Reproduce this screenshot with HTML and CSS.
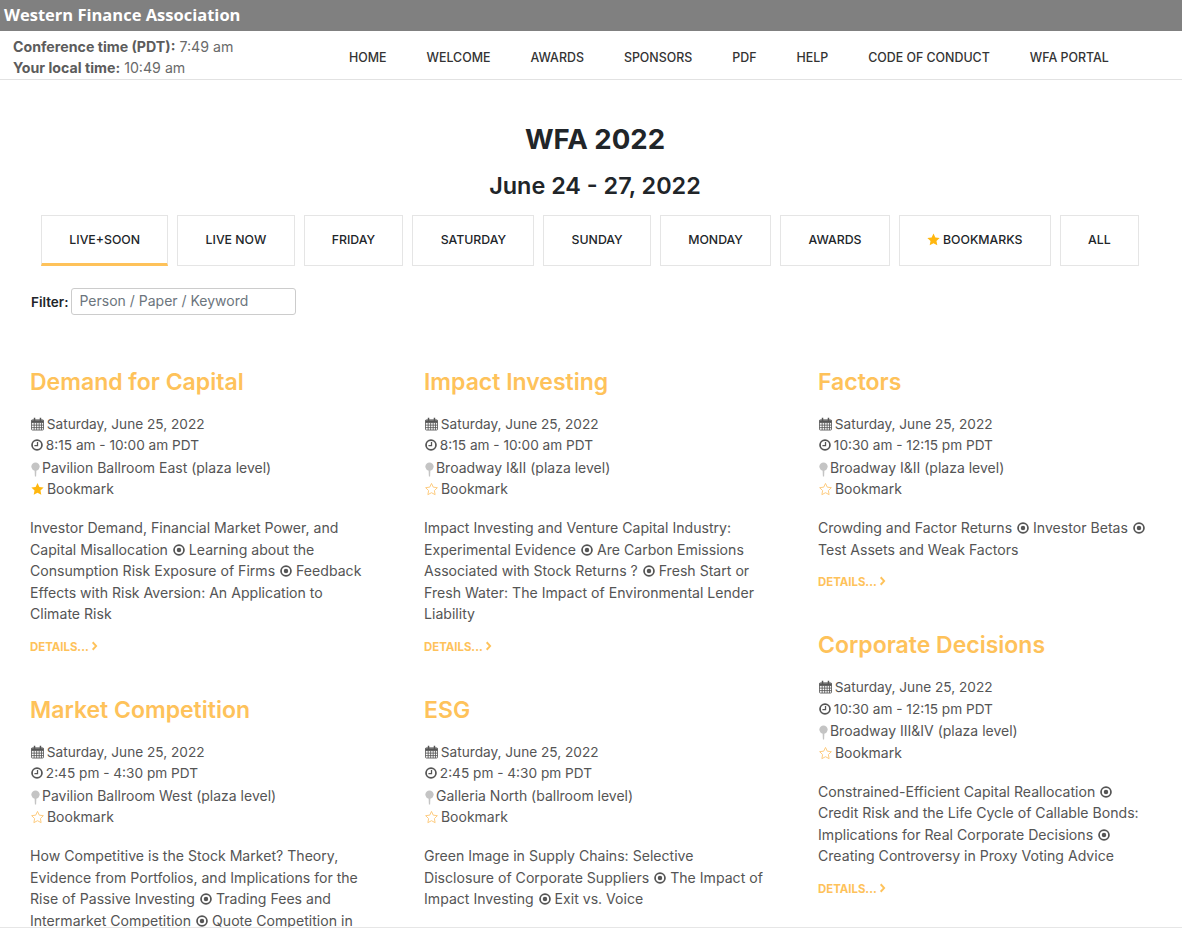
FILE: index.html
```html
<!DOCTYPE html>
<html lang="en">
<head>
    <meta charset="UTF-8">
    <title>WFA 2022</title>
    <link rel="stylesheet" href="styles.css">
</head>
<body>
    <svg class="icon-defs" aria-hidden="true">
        <symbol id="i-cal" viewBox="0 0 14 14">
            <path d="M1.500 2.500h11a1 1 0 0 1 1 1v9a1 1 0 0 1-1 1h-11a1 1 0 0 1-1-1v-9a1 1 0 0 1 1-1zM.5 5.500h13M.5 8.200h13M.5 10.900h13M3.400 5.500v8M6.100 5.500v8M8.800 5.500v8M11.300 5.500v8" fill="none" stroke="currentColor" stroke-width=".9"/>
            <path d="M3 .3h1.600v3.400H3zM9.400 .3H11v3.400H9.400zM.5 3h13v2.500H.5z" fill="currentColor"/>
        </symbol>
        <symbol id="i-clock" viewBox="0 0 14 14">
            <circle cx="7" cy="7" r="5.800" fill="none" stroke="currentColor" stroke-width="2"/>
            <path d="M7.600 3.600v4.200H4" fill="none" stroke="currentColor" stroke-width="1.500"/>
        </symbol>
        <symbol id="i-pin" viewBox="0 0 10 16">
            <circle cx="5" cy="4.800" r="4.600" fill="currentColor"/>
            <path d="M4 8h2l-.3 7.700h-1.400z" fill="currentColor"/>
        </symbol>
        <symbol id="i-star" viewBox="0 0 14 14">
            <path d="M7 .6l2 4.200 4.600.6-3.400 3.200.9 4.600L7 11.100l-4.100 2.100.9-4.600L.4 5.400 5 4.800z" fill="currentColor"/>
        </symbol>
        <symbol id="i-star-o" viewBox="0 0 14 14">
            <path d="M7 1l1.900 4 4.400.6-3.200 3.100.8 4.400L7 11l-3.900 2.100.8-4.400L.7 5.600l4.400-.6z" fill="none" stroke="currentColor" stroke-width="1"/>
        </symbol>
        <symbol id="i-dot" viewBox="0 0 14 14">
            <circle cx="7" cy="7" r="5.800" fill="none" stroke="currentColor" stroke-width="2"/>
            <circle cx="7" cy="7" r="2.600" fill="currentColor"/>
        </symbol>
        <symbol id="i-chev" viewBox="0 0 8 12">
            <path d="M1.800 1.500L6 6l-4.200 4.500" fill="none" stroke="currentColor" stroke-width="2.200"/>
        </symbol>
    </svg>

    <div class="top-bar">Western Finance Association</div>

    <div class="nav-row">
        <div class="times">
            <div><b>Conference time (PDT):</b> 7:49 am</div>
            <div><b>Your local time:</b> 10:49 am</div>
        </div>
        <nav class="main-nav">
            <a href="#">HOME</a>
            <a href="#">WELCOME</a>
            <a href="#">AWARDS</a>
            <a href="#">SPONSORS</a>
            <a href="#">PDF</a>
            <a href="#">HELP</a>
            <a href="#">CODE OF CONDUCT</a>
            <a href="#">WFA PORTAL</a>
        </nav>
    </div>

    <div class="page-head">
        <h1>WFA 2022</h1>
        <h2>June 24 - 27, 2022</h2>
    </div>

    <div class="tabs">
        <a class="tab active" href="#">LIVE+SOON</a>
        <a class="tab" href="#">LIVE NOW</a>
        <a class="tab" href="#">FRIDAY</a>
        <a class="tab" href="#">SATURDAY</a>
        <a class="tab" href="#">SUNDAY</a>
        <a class="tab" href="#">MONDAY</a>
        <a class="tab" href="#">AWARDS</a>
        <a class="tab" href="#"><svg class="tab-star"><use href="#i-star"/></svg> BOOKMARKS</a>
        <a class="tab" href="#">ALL</a>
    </div>

    <div class="filter">
        <label for="filter">Filter:</label>
        <input type="text" id="filter" placeholder="Person / Paper / Keyword">
    </div>

    <div class="columns">
        <div class="col">
            <section class="session">
                <h3>Demand for Capital</h3>
                <div class="meta">
                    <div class="when"><svg class="ico"><use href="#i-cal"/></svg> Saturday, June 25, 2022</div>
                    <div class="when"><svg class="ico ico-sm"><use href="#i-clock"/></svg> 8:15 am - 10:00 am PDT</div>
                    <div><svg class="ico-pin"><use href="#i-pin"/></svg> Pavilion Ballroom East (plaza level)</div>
                    <div><svg class="ico star-on"><use href="#i-star"/></svg> Bookmark</div>
                </div>
                <p>Investor Demand, Financial Market Power, and Capital Misallocation <svg class="ico ico-sm"><use href="#i-dot"/></svg> Learning about the Consumption Risk Exposure of Firms <svg class="ico ico-sm"><use href="#i-dot"/></svg> Feedback Effects with Risk Aversion: An Application to Climate Risk</p>
                <a class="details" href="#">DETAILS... <svg class="chev"><use href="#i-chev"/></svg></a>
            </section>
            <section class="session">
                <h3>Market Competition</h3>
                <div class="meta">
                    <div class="when"><svg class="ico"><use href="#i-cal"/></svg> Saturday, June 25, 2022</div>
                    <div class="when"><svg class="ico ico-sm"><use href="#i-clock"/></svg> 2:45 pm - 4:30 pm PDT</div>
                    <div><svg class="ico-pin"><use href="#i-pin"/></svg> Pavilion Ballroom West (plaza level)</div>
                    <div><svg class="ico star-off"><use href="#i-star-o"/></svg> Bookmark</div>
                </div>
                <p>How Competitive is the Stock Market? Theory, Evidence from Portfolios, and Implications for the Rise of Passive Investing <svg class="ico ico-sm"><use href="#i-dot"/></svg> Trading Fees and Intermarket Competition <svg class="ico ico-sm"><use href="#i-dot"/></svg> Quote Competition in</p>
            </section>
        </div>
        <div class="col">
            <section class="session">
                <h3>Impact Investing</h3>
                <div class="meta">
                    <div class="when"><svg class="ico"><use href="#i-cal"/></svg> Saturday, June 25, 2022</div>
                    <div class="when"><svg class="ico ico-sm"><use href="#i-clock"/></svg> 8:15 am - 10:00 am PDT</div>
                    <div><svg class="ico-pin"><use href="#i-pin"/></svg> Broadway I&amp;II (plaza level)</div>
                    <div><svg class="ico star-off"><use href="#i-star-o"/></svg> Bookmark</div>
                </div>
                <p>Impact Investing and Venture Capital Industry: Experimental Evidence <svg class="ico ico-sm"><use href="#i-dot"/></svg> Are Carbon Emissions Associated with Stock Returns ? <svg class="ico ico-sm"><use href="#i-dot"/></svg> Fresh Start or Fresh Water: The Impact of Environmental Lender Liability</p>
                <a class="details" href="#">DETAILS... <svg class="chev"><use href="#i-chev"/></svg></a>
            </section>
            <section class="session">
                <h3>ESG</h3>
                <div class="meta">
                    <div class="when"><svg class="ico"><use href="#i-cal"/></svg> Saturday, June 25, 2022</div>
                    <div class="when"><svg class="ico ico-sm"><use href="#i-clock"/></svg> 2:45 pm - 4:30 pm PDT</div>
                    <div><svg class="ico-pin"><use href="#i-pin"/></svg> Galleria North (ballroom level)</div>
                    <div><svg class="ico star-off"><use href="#i-star-o"/></svg> Bookmark</div>
                </div>
                <p>Green Image in Supply Chains: Selective Disclosure of Corporate Suppliers <svg class="ico ico-sm"><use href="#i-dot"/></svg> The Impact of Impact Investing <svg class="ico ico-sm"><use href="#i-dot"/></svg> Exit vs. Voice</p>
            </section>
        </div>
        <div class="col">
            <section class="session">
                <h3>Factors</h3>
                <div class="meta">
                    <div class="when"><svg class="ico"><use href="#i-cal"/></svg> Saturday, June 25, 2022</div>
                    <div class="when"><svg class="ico ico-sm"><use href="#i-clock"/></svg> 10:30 am - 12:15 pm PDT</div>
                    <div><svg class="ico-pin"><use href="#i-pin"/></svg> Broadway I&amp;II (plaza level)</div>
                    <div><svg class="ico star-off"><use href="#i-star-o"/></svg> Bookmark</div>
                </div>
                <p>Crowding and Factor Returns <svg class="ico ico-sm"><use href="#i-dot"/></svg> Investor Betas <svg class="ico ico-sm"><use href="#i-dot"/></svg> Test Assets and Weak Factors</p>
                <a class="details" href="#">DETAILS... <svg class="chev"><use href="#i-chev"/></svg></a>
            </section>
            <section class="session">
                <h3>Corporate Decisions</h3>
                <div class="meta">
                    <div class="when"><svg class="ico"><use href="#i-cal"/></svg> Saturday, June 25, 2022</div>
                    <div class="when"><svg class="ico ico-sm"><use href="#i-clock"/></svg> 10:30 am - 12:15 pm PDT</div>
                    <div><svg class="ico-pin"><use href="#i-pin"/></svg> Broadway III&amp;IV (plaza level)</div>
                    <div><svg class="ico star-off"><use href="#i-star-o"/></svg> Bookmark</div>
                </div>
                <p>Constrained-Efficient Capital Reallocation <svg class="ico ico-sm"><use href="#i-dot"/></svg><br>Credit Risk and the Life Cycle of Callable Bonds: Implications for Real Corporate Decisions <svg class="ico ico-sm"><use href="#i-dot"/></svg> Creating Controversy in Proxy Voting Advice</p>
                <a class="details" href="#">DETAILS... <svg class="chev"><use href="#i-chev"/></svg></a>
            </section>
        </div>
    </div>

    <div class="bottom-rule"></div>
</body>
</html>
```

FILE: styles.css
```css
* {
    margin: 0;
    padding: 0;
    box-sizing: border-box;
}

html, body {
    height: 928px;
    overflow: hidden;
}

body {
    background: #fff;
    color: #555;
    font-family: Inter, "Open Sans", sans-serif;
    font-size: 14px;
}

a {
    text-decoration: none;
}

.icon-defs {
    display: none;
}

.top-bar {
    background: #808080;
    color: #fff;
    font-family: "Open Sans", sans-serif;
    font-weight: 700;
    font-size: 16.500px;
    height: 31px;
    line-height: 30px;
    padding-left: 4px;
}

.nav-row {
    display: flex;
    align-items: center;
    height: 49px;
    border-bottom: 1px solid #e2e2e2;
    padding: 4px 0 0 13px;
}

.times {
    width: 336px;
    line-height: 21px;
    font-size: 14.200px;
    color: #6a6a6a;
}

.times b {
    color: #5c5c5c;
}

.main-nav {
    display: flex;
    gap: 40px;
}

.main-nav a {
    color: #333;
    font-size: 12.400px;
    font-weight: 500;
}

.page-head {
    text-align: center;
    color: #212529;
    padding: 39px 0 0 8px;
}

.page-head h1 {
    font-size: 27.600px;
    font-weight: 700;
    line-height: 40px;
}

.page-head h2 {
    font-size: 23.400px;
    font-weight: 600;
    line-height: 32px;
    margin-top: 11px;
}

.tabs {
    display: flex;
    justify-content: center;
    gap: 9px;
    margin-top: 13px;
    padding-right: 2px;
}

.tab {
    display: flex;
    align-items: center;
    height: 51px;
    padding: 0 27.250px 2px;
    border: 1px solid #e5e5e5;
    color: #212529;
    font-size: 12.300px;
    font-weight: 500;
    white-space: nowrap;
}

.tab.active {
    border-bottom: 3px solid #fec25a;
    padding-bottom: 0;
}

.tab-star {
    width: 13px;
    height: 13px;
    color: #ffb70f;
    margin-right: 3px;
}

.filter {
    display: flex;
    align-items: center;
    gap: 3px;
    margin: 22px 0 0 31px;
}

.filter label {
    color: #212529;
    font-size: 13.500px;
    font-weight: 600;
}

.filter input {
    width: 225px;
    height: 27px;
    border: 1px solid #ccc;
    border-radius: 3px;
    padding: 0 0 2px 7px;
    font-family: inherit;
    font-size: 14px;
    color: #555;
}

.filter input::placeholder {
    color: #6c757d;
}

.columns {
    display: grid;
    grid-template-columns: repeat(3, 394px);
    padding: 49.500px 0 0 30px;
}

.session {
    width: 342px;
    margin-bottom: 36px;
}

.session h3 {
    color: #fec25a;
    font-size: 23px;
    font-weight: 600;
    line-height: 34px;
    margin-bottom: 15px;
}

.meta {
    line-height: 21.500px;
    margin-bottom: 17.500px;
}

.when {
    font-size: 13.650px;
}

.session p {
    font-size: 14.100px;
    line-height: 21.500px;
}

.ico {
    width: 13px;
    height: 14px;
    margin: 0 -1px 0 1px;
    color: #555;
    vertical-align: -2px;
}

.ico-sm {
    width: 12px;
    height: 12px;
    margin-right: 0;
    vertical-align: -1px;
}

.when .ico-sm {
    margin-right: -1px;
}

.ico-pin {
    width: 9px;
    height: 15px;
    margin: 0 -2px 0 1px;
    color: #c4c4c4;
    vertical-align: -4px;
}

.ico.star-on {
    color: #ffb70f;
}

.ico.star-off {
    color: #fdc877;
}

.details {
    display: block;
    margin-top: 12px;
    color: #fec25a;
    font-size: 11.400px;
    font-weight: 700;
    line-height: 20px;
}

.chev {
    width: 7px;
    height: 10px;
    color: #fec25a;
}

.bottom-rule {
    position: fixed;
    left: 0;
    right: 0;
    bottom: 0;
    height: 1px;
    background: #e6e6e6;
}
```
